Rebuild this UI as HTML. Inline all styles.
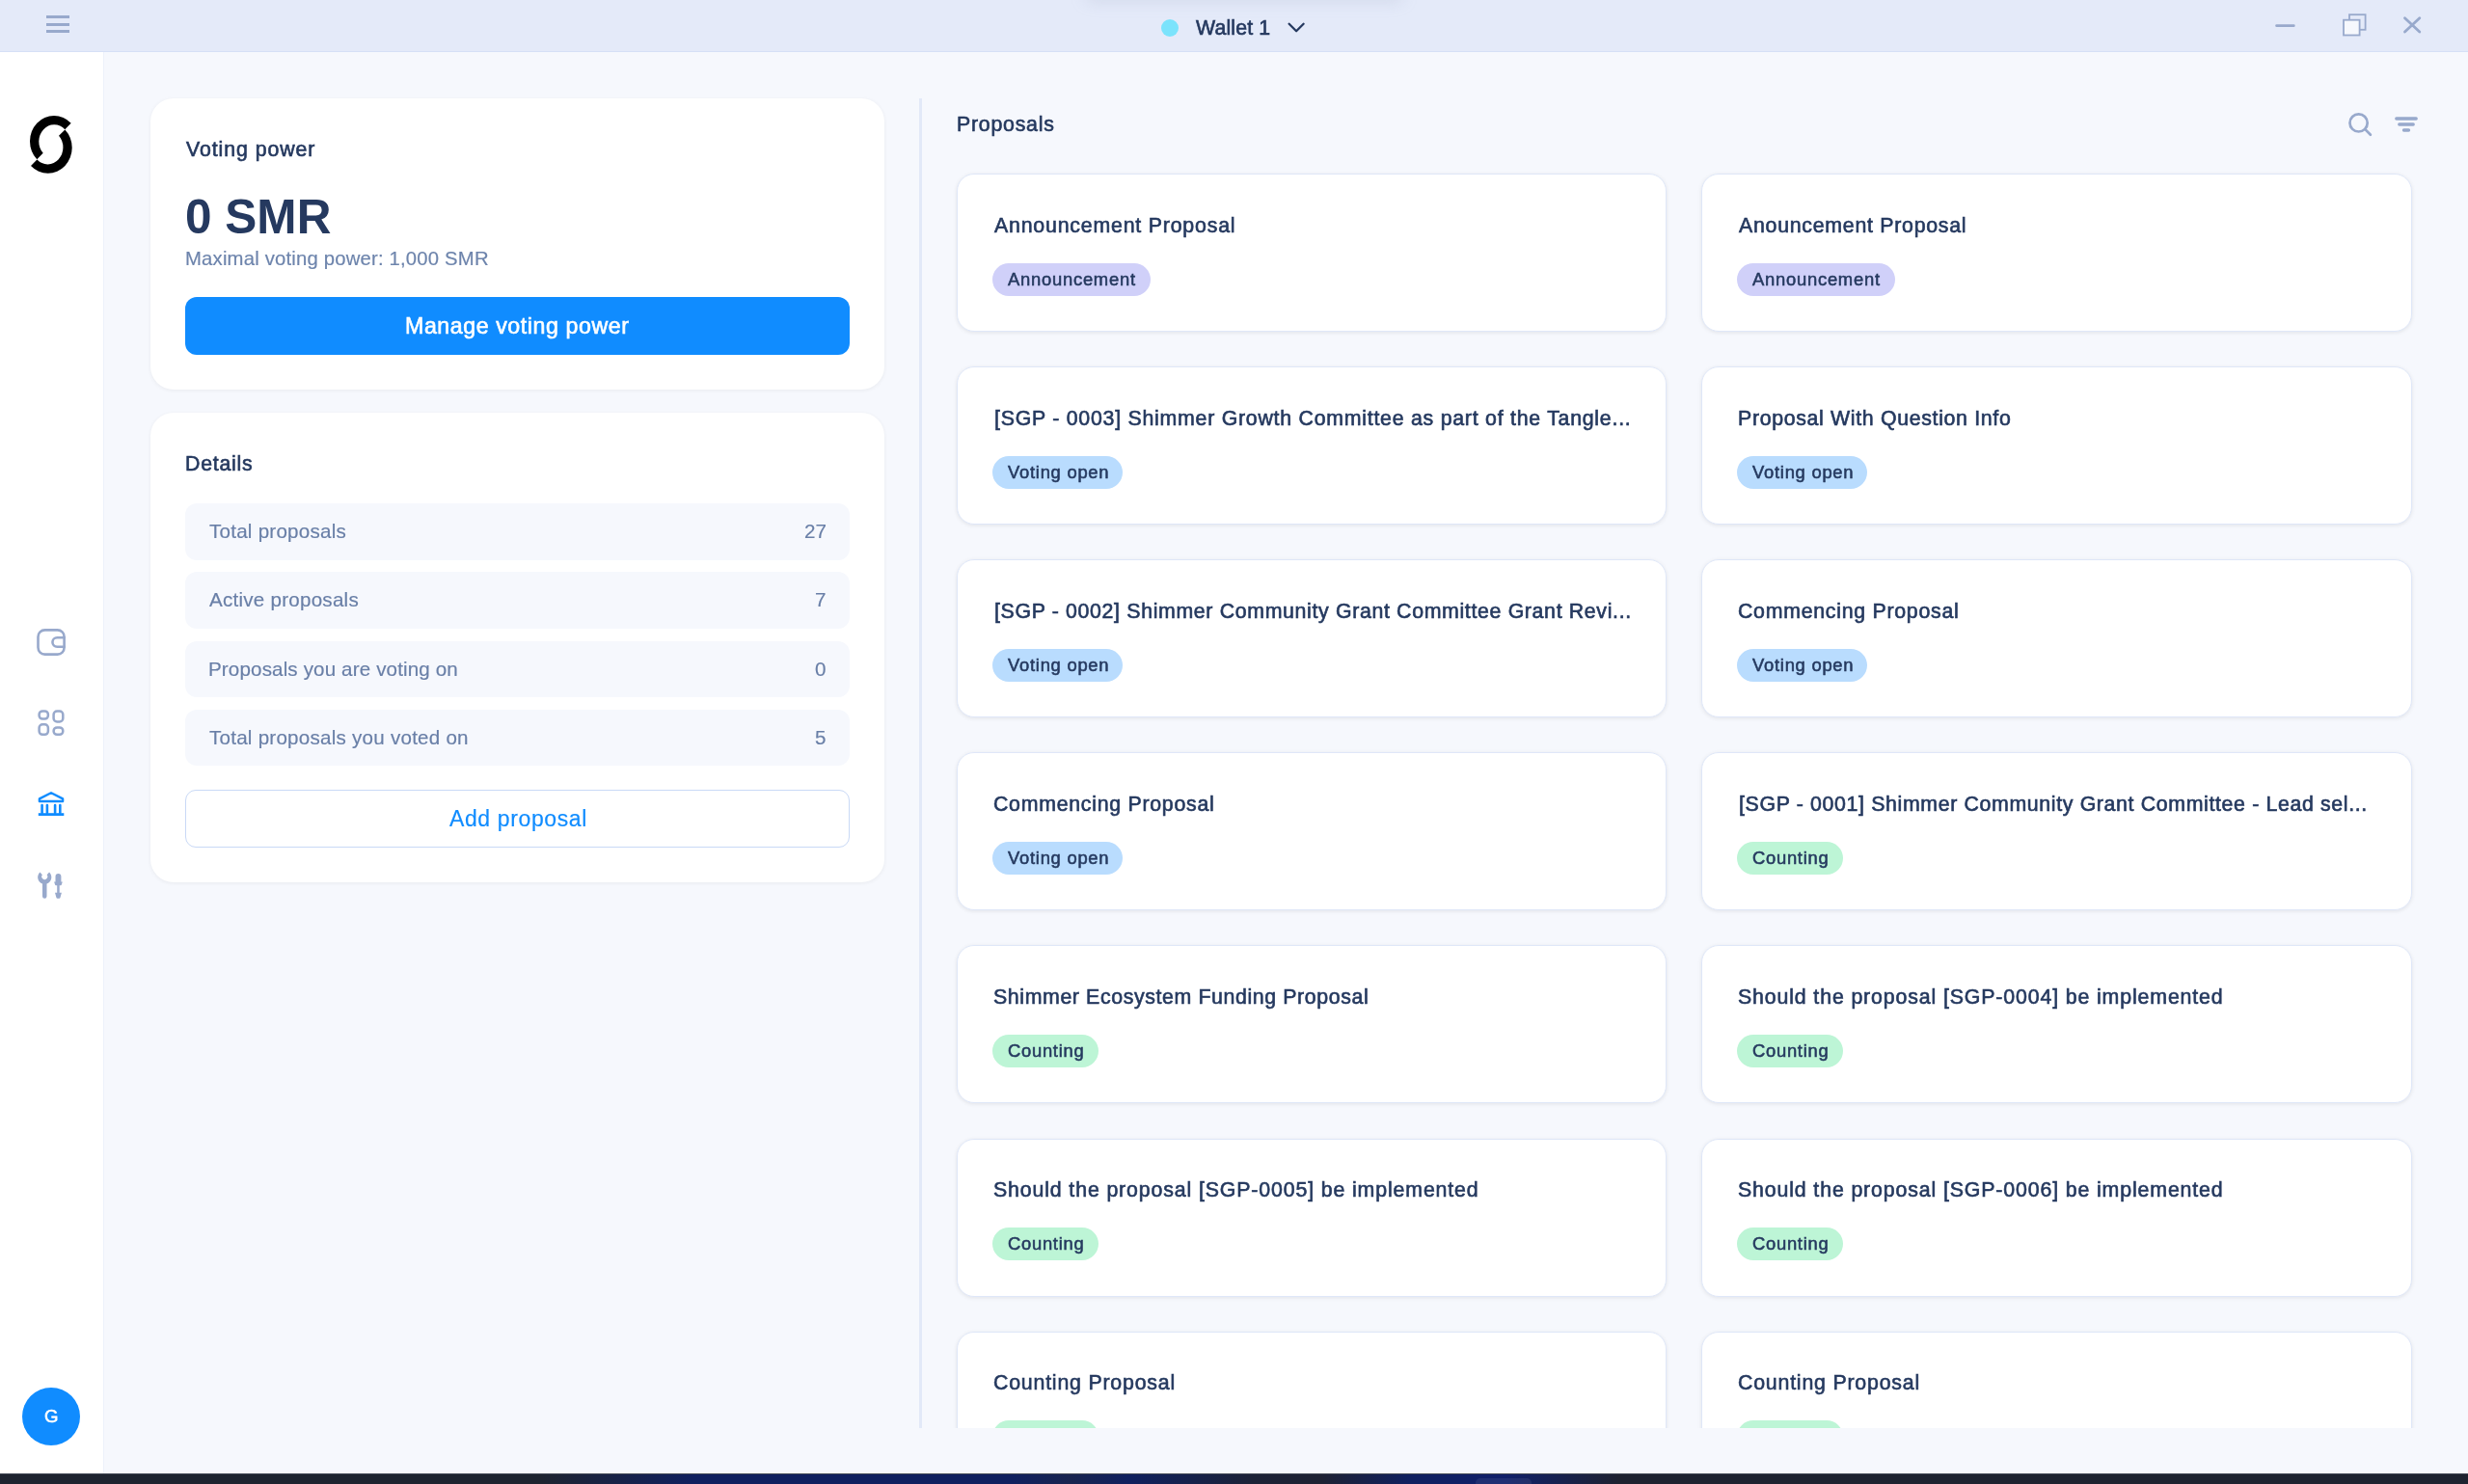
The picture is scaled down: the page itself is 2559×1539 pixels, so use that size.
<!DOCTYPE html>
<html><head><meta charset="utf-8"><title>Firefly - Governance</title>
<style>
html,body{margin:0;padding:0}
body{width:2559px;height:1539px;overflow:hidden;position:relative;background:#f6f8fd;font-family:"Liberation Sans", sans-serif}
.b{position:absolute}
.t{position:absolute;line-height:1;white-space:nowrap;will-change:transform}
</style></head><body>
<div class="b" style="left:0px;top:0px;width:2559px;height:53px;background:#e4eaf9"></div>
<div class="b" style="left:0px;top:53px;width:2559px;height:1px;background:#d6e0f6"></div>
<div class="b" style="left:1125px;top:-12px;width:330px;height:14px;border-radius:7px;background:rgba(140,150,180,0.2);filter:blur(8px)"></div>
<div class="b" style="left:48px;top:16px;width:24px;height:3px;background:#98a9cc"></div>
<div class="b" style="left:48px;top:23.7px;width:24px;height:3px;background:#98a9cc"></div>
<div class="b" style="left:48px;top:31px;width:24px;height:3px;background:#98a9cc"></div>
<div class="b" style="left:1204px;top:20px;width:18px;height:18px;border-radius:50%;background:#7be3fc"></div>
<div class="t" style="left:1240.00px;top:19.05px;color:#25395f;font-size:21.3px;-webkit-text-stroke:0.62px currentColor;letter-spacing:0.143px">Wallet 1</div>
<svg class="b" style="left:1330px;top:18px" width="30" height="22" viewBox="0 0 30 22"><path d="M6.6 6.8 L14.1 14.3 L21.6 6.8" fill="none" stroke="#25395f" stroke-width="2.3" stroke-linecap="round" stroke-linejoin="round"/></svg>
<svg class="b" style="left:2340px;top:0" width="219" height="53" viewBox="2340 0 219 53"><line x1="2360.6" y1="26.7" x2="2378.3" y2="26.7" stroke="#98a9cc" stroke-width="2.8" stroke-linecap="round"/><rect x="2436" y="15.2" width="16.6" height="15.6" fill="none" stroke="#98a9cc" stroke-width="1.8"/><rect x="2430" y="20.7" width="16.6" height="15.8" fill="#f6f8fd" stroke="#98a9cc" stroke-width="1.8"/><path d="M2493.5 18.8 L2508.8 33 M2508.8 18.8 L2493.5 33" stroke="#98a9cc" stroke-width="2.8" stroke-linecap="round"/></svg>
<div class="b" style="left:0px;top:54px;width:107px;height:1474px;background:#ffffff"></div>
<div class="b" style="left:107px;top:54px;width:1px;height:1474px;background:#edf1fa"></div>
<svg class="b" style="left:0;top:0" width="107" height="200" viewBox="0 0 107 200"><path d="M73.68 127.76 A25.0 26.5 0 0 0 38.32 165.24 L44.69 158.87 A16.0 17.5 0 0 1 67.31 134.13 Z M32.02 171.94 A25.0 26.5 0 0 0 67.38 134.46 L61.01 140.83 A16.0 17.5 0 0 1 38.39 165.57 Z" fill="#000"/></svg>
<svg class="b" style="left:0;top:600px" width="107" height="360" viewBox="0 600 107 360" fill="none" stroke-linecap="round" stroke-linejoin="round"><rect x="39.5" y="653.4" width="27.1" height="25.2" rx="7" stroke="#98a9cc" stroke-width="2.6"/><path d="M66.6 661.3 H59.2 A4.75 4.75 0 0 0 59.2 670.8 H66.6" stroke="#98a9cc" stroke-width="2.6"/><rect x="40.6" y="737.4" width="9.3" height="8.2" rx="3.5" stroke="#98a9cc" stroke-width="2.5"/><rect x="55.6" y="737.5" width="9.7" height="10.9" rx="3.5" stroke="#98a9cc" stroke-width="2.5"/><rect x="40.6" y="751.3" width="9.3" height="10.5" rx="3.5" stroke="#98a9cc" stroke-width="2.5"/><rect x="55.6" y="754.4" width="9.7" height="7.4" rx="3.5" stroke="#98a9cc" stroke-width="2.5"/><path d="M40.9 831 L40.9 828.4 L53 822.3 L65.1 828.4 L65.1 831 Z" stroke="#108cff" stroke-width="2.4"/><path d="M43.6 835 V843 M48.9 835 V843 M57.1 835 V843 M62.3 835 V843" stroke="#108cff" stroke-width="2.6"/><path d="M39.8 844.6 H66.3" stroke="#108cff" stroke-width="2.8" stroke-linecap="butt"/></svg>
<svg class="b" style="left:0;top:880px" width="107" height="70" viewBox="0 880 107 70"><path d="M41.4 904.6 L43.9 907.3 A3.0 3.0 0 1 0 48.6 907.3 L51.1 904.6 A7.0 7.0 0 0 1 48.5 916.4 V929.4 A2.25 2.25 0 0 1 44 929.4 V916.4 A7.0 7.0 0 0 1 41.4 904.6 Z" fill="#98a9cc"/><path d="M60.45 906 A3 3 0 0 1 63.4 909 V914.6 H64.8 L63.8 917.6 A0.8 0.8 0 0 1 63 918.2 H61.7 V925.8 H63.9 L62.5 930.8 A1.2 1.2 0 0 1 61.3 931.7 H59.6 A1.2 1.2 0 0 1 58.4 930.8 L57 925.8 H59.2 V918.2 H57.9 A0.8 0.8 0 0 1 57.1 917.6 L56.1 914.6 H57.5 V909 A3 3 0 0 1 60.45 906 Z" fill="#98a9cc"/></svg>
<div class="b" style="left:23px;top:1439px;width:60px;height:60px;border-radius:50%;background:#108cff"></div>
<div class="t" style="left:46.20px;top:1460.05px;color:#ffffff;font-size:18.6px;-webkit-text-stroke:0.55px currentColor;letter-spacing:0.000px">G</div>
<div class="b" style="left:0;top:1528px;width:2559px;height:11px;background:linear-gradient(90deg,#1e2430 0px,#1e2430 560px,#10205f 720px,#10205f 1050px,#18244f 1110px,#10205f 1170px,#1c2236 1300px,#1e2233 1370px,#10205f 1460px,#10206a 1560px,#1e2230 1680px,#1e2330 2559px)"></div>
<div class="b" style="left:1530px;top:1533px;width:58px;height:12px;border-radius:5px;background:rgba(255,255,255,0.07)"></div>
<div class="b" style="left:0px;top:1528px;width:2559px;height:1px;background:#434955"></div>
<div class="b" style="left:156px;top:102px;width:761px;height:302px;background:#fff;border-radius:24px;box-shadow:0 1px 4px rgba(0,0,0,0.06)"></div>
<div class="t" style="left:193.00px;top:145.05px;color:#25395f;font-size:21.3px;-webkit-text-stroke:0.62px currentColor;letter-spacing:0.936px">Voting power</div>
<div class="t" style="left:191.80px;top:200.05px;color:#25395f;font-size:49.5px;font-weight:700;letter-spacing:0.025px">0 SMR</div>
<div class="t" style="left:192.10px;top:258.05px;color:#6d84ac;font-size:20.3px;-webkit-text-stroke:0.18px currentColor;letter-spacing:0.190px">Maximal voting power: 1,000 SMR</div>
<div class="b" style="left:192px;top:308px;width:689px;height:60px;background:#108cff;border-radius:12px"></div>
<div class="t" style="left:420.10px;top:327.05px;color:#ffffff;font-size:23.2px;-webkit-text-stroke:0.62px currentColor;letter-spacing:0.567px">Manage voting power</div>
<div class="b" style="left:156px;top:428px;width:761px;height:487px;background:#fff;border-radius:24px;box-shadow:0 1px 4px rgba(0,0,0,0.06)"></div>
<div class="t" style="left:192.10px;top:471.05px;color:#25395f;font-size:21.3px;-webkit-text-stroke:0.62px currentColor;letter-spacing:0.750px">Details</div>
<div class="b" style="left:192px;top:522.0px;width:689px;height:58.7px;background:#f6f8fd;border-radius:12px"></div>
<div class="t" style="left:217.00px;top:541.05px;color:#697fa7;font-size:20.6px;-webkit-text-stroke:0.18px currentColor;letter-spacing:0.236px">Total proposals</div>
<div class="t" style="left:833.80px;top:541.05px;color:#697fa7;font-size:20.6px;-webkit-text-stroke:0.18px currentColor;letter-spacing:0.100px">27</div>
<div class="b" style="left:192px;top:593.25px;width:689px;height:58.7px;background:#f6f8fd;border-radius:12px"></div>
<div class="t" style="left:217.00px;top:612.05px;color:#697fa7;font-size:20.6px;-webkit-text-stroke:0.18px currentColor;letter-spacing:0.240px">Active proposals</div>
<div class="t" style="left:844.80px;top:612.05px;color:#697fa7;font-size:20.6px;-webkit-text-stroke:0.18px currentColor;letter-spacing:0.100px">7</div>
<div class="b" style="left:192px;top:664.5px;width:689px;height:58.7px;background:#f6f8fd;border-radius:12px"></div>
<div class="t" style="left:216.00px;top:684.05px;color:#697fa7;font-size:20.6px;-webkit-text-stroke:0.18px currentColor;letter-spacing:0.135px">Proposals you are voting on</div>
<div class="t" style="left:844.80px;top:684.05px;color:#697fa7;font-size:20.6px;-webkit-text-stroke:0.18px currentColor;letter-spacing:0.100px">0</div>
<div class="b" style="left:192px;top:735.75px;width:689px;height:58.7px;background:#f6f8fd;border-radius:12px"></div>
<div class="t" style="left:217.00px;top:755.05px;color:#697fa7;font-size:20.6px;-webkit-text-stroke:0.18px currentColor;letter-spacing:0.237px">Total proposals you voted on</div>
<div class="t" style="left:844.80px;top:755.05px;color:#697fa7;font-size:20.6px;-webkit-text-stroke:0.18px currentColor;letter-spacing:0.100px">5</div>
<div class="b" style="left:192px;top:819px;width:689px;height:60px;border:1px solid #c9d9f6;border-radius:11px;box-sizing:border-box"></div>
<div class="t" style="left:465.50px;top:838.05px;color:#108cff;font-size:23.0px;-webkit-text-stroke:0.18px currentColor;letter-spacing:0.618px">Add proposal</div>
<div class="b" style="left:953px;top:102px;width:2.5px;height:1379px;background:#e2e9f8"></div>
<div class="t" style="left:991.50px;top:119.05px;color:#25395f;font-size:21.3px;-webkit-text-stroke:0.62px currentColor;letter-spacing:0.762px">Proposals</div>
<svg class="b" style="left:2420px;top:100px" width="110" height="60" viewBox="2420 100 110 60" fill="none" stroke="#98a9cc" stroke-linecap="round"><circle cx="2445.6" cy="127.4" r="9.1" stroke-width="2.7"/><path d="M2452.6 134.4 L2457.9 139.7" stroke-width="2.7"/><path d="M2484.8 123 H2505.2 M2487.8 129 H2502.2 M2492.5 135 H2497.5" stroke-width="3.4"/></svg>
<div class="b" style="left:960px;top:54px;width:1599px;height:1427px;overflow:hidden">
<div class="b" style="left:32.00px;top:126.00px;width:736px;height:164px;box-sizing:border-box;background:#fff;border:1px solid #dfe7f8;border-radius:18px;box-shadow:0 1px 4px rgba(0,0,0,0.085)"></div>
<div class="t" style="left:70.60px;top:170.05px;color:#25395f;font-size:21.3px;-webkit-text-stroke:0.62px currentColor;letter-spacing:0.815px">Announcement Proposal</div>
<div class="b" style="left:69.40px;top:218.60px;width:164px;height:34px;border-radius:17px;background:#d0d0f9"></div>
<div class="t" style="left:85.10px;top:227.05px;color:#25395f;font-size:18.4px;-webkit-text-stroke:0.55px currentColor;letter-spacing:0.755px">Announcement</div>
<div class="b" style="left:804.00px;top:126.00px;width:737px;height:164px;box-sizing:border-box;background:#fff;border:1px solid #dfe7f8;border-radius:18px;box-shadow:0 1px 4px rgba(0,0,0,0.085)"></div>
<div class="t" style="left:842.60px;top:170.05px;color:#25395f;font-size:21.3px;-webkit-text-stroke:0.62px currentColor;letter-spacing:0.747px">Anouncement Proposal</div>
<div class="b" style="left:841.40px;top:218.60px;width:164px;height:34px;border-radius:17px;background:#d0d0f9"></div>
<div class="t" style="left:857.10px;top:227.05px;color:#25395f;font-size:18.4px;-webkit-text-stroke:0.55px currentColor;letter-spacing:0.755px">Announcement</div>
<div class="b" style="left:32.00px;top:326.10px;width:736px;height:164px;box-sizing:border-box;background:#fff;border:1px solid #dfe7f8;border-radius:18px;box-shadow:0 1px 4px rgba(0,0,0,0.085)"></div>
<div class="t" style="left:70.60px;top:370.05px;color:#25395f;font-size:21.3px;-webkit-text-stroke:0.62px currentColor;letter-spacing:0.757px">[SGP - 0003] Shimmer Growth Committee as part of the Tangle...</div>
<div class="b" style="left:69.40px;top:418.70px;width:135px;height:34px;border-radius:17px;background:#b9dcfe"></div>
<div class="t" style="left:85.10px;top:427.05px;color:#25395f;font-size:18.4px;-webkit-text-stroke:0.55px currentColor;letter-spacing:0.740px">Voting open</div>
<div class="b" style="left:804.00px;top:326.10px;width:737px;height:164px;box-sizing:border-box;background:#fff;border:1px solid #dfe7f8;border-radius:18px;box-shadow:0 1px 4px rgba(0,0,0,0.085)"></div>
<div class="t" style="left:841.60px;top:370.05px;color:#25395f;font-size:21.3px;-webkit-text-stroke:0.62px currentColor;letter-spacing:0.677px">Proposal With Question Info</div>
<div class="b" style="left:841.40px;top:418.70px;width:135px;height:34px;border-radius:17px;background:#b9dcfe"></div>
<div class="t" style="left:857.10px;top:427.05px;color:#25395f;font-size:18.4px;-webkit-text-stroke:0.55px currentColor;letter-spacing:0.740px">Voting open</div>
<div class="b" style="left:32.00px;top:526.20px;width:736px;height:164px;box-sizing:border-box;background:#fff;border:1px solid #dfe7f8;border-radius:18px;box-shadow:0 1px 4px rgba(0,0,0,0.085)"></div>
<div class="t" style="left:70.60px;top:570.05px;color:#25395f;font-size:21.3px;-webkit-text-stroke:0.62px currentColor;letter-spacing:0.664px">[SGP - 0002] Shimmer Community Grant Committee Grant Revi...</div>
<div class="b" style="left:69.40px;top:618.80px;width:135px;height:34px;border-radius:17px;background:#b9dcfe"></div>
<div class="t" style="left:85.10px;top:627.05px;color:#25395f;font-size:18.4px;-webkit-text-stroke:0.55px currentColor;letter-spacing:0.740px">Voting open</div>
<div class="b" style="left:804.00px;top:526.20px;width:737px;height:164px;box-sizing:border-box;background:#fff;border:1px solid #dfe7f8;border-radius:18px;box-shadow:0 1px 4px rgba(0,0,0,0.085)"></div>
<div class="t" style="left:841.60px;top:570.05px;color:#25395f;font-size:21.3px;-webkit-text-stroke:0.62px currentColor;letter-spacing:0.739px">Commencing Proposal</div>
<div class="b" style="left:841.40px;top:618.80px;width:135px;height:34px;border-radius:17px;background:#b9dcfe"></div>
<div class="t" style="left:857.10px;top:627.05px;color:#25395f;font-size:18.4px;-webkit-text-stroke:0.55px currentColor;letter-spacing:0.740px">Voting open</div>
<div class="b" style="left:32.00px;top:726.30px;width:736px;height:164px;box-sizing:border-box;background:#fff;border:1px solid #dfe7f8;border-radius:18px;box-shadow:0 1px 4px rgba(0,0,0,0.085)"></div>
<div class="t" style="left:69.60px;top:770.05px;color:#25395f;font-size:21.3px;-webkit-text-stroke:0.62px currentColor;letter-spacing:0.739px">Commencing Proposal</div>
<div class="b" style="left:69.40px;top:818.90px;width:135px;height:34px;border-radius:17px;background:#b9dcfe"></div>
<div class="t" style="left:85.10px;top:827.05px;color:#25395f;font-size:18.4px;-webkit-text-stroke:0.55px currentColor;letter-spacing:0.740px">Voting open</div>
<div class="b" style="left:804.00px;top:726.30px;width:737px;height:164px;box-sizing:border-box;background:#fff;border:1px solid #dfe7f8;border-radius:18px;box-shadow:0 1px 4px rgba(0,0,0,0.085)"></div>
<div class="t" style="left:842.60px;top:770.05px;color:#25395f;font-size:21.3px;-webkit-text-stroke:0.62px currentColor;letter-spacing:0.654px">[SGP - 0001] Shimmer Community Grant Committee - Lead sel...</div>
<div class="b" style="left:841.40px;top:818.90px;width:110px;height:34px;border-radius:17px;background:#bdf5d6"></div>
<div class="t" style="left:857.10px;top:827.05px;color:#25395f;font-size:18.4px;-webkit-text-stroke:0.55px currentColor;letter-spacing:0.714px">Counting</div>
<div class="b" style="left:32.00px;top:926.40px;width:736px;height:164px;box-sizing:border-box;background:#fff;border:1px solid #dfe7f8;border-radius:18px;box-shadow:0 1px 4px rgba(0,0,0,0.085)"></div>
<div class="t" style="left:69.60px;top:970.05px;color:#25395f;font-size:21.3px;-webkit-text-stroke:0.62px currentColor;letter-spacing:0.624px">Shimmer Ecosystem Funding Proposal</div>
<div class="b" style="left:69.40px;top:1019.00px;width:110px;height:34px;border-radius:17px;background:#bdf5d6"></div>
<div class="t" style="left:85.10px;top:1027.05px;color:#25395f;font-size:18.4px;-webkit-text-stroke:0.55px currentColor;letter-spacing:0.714px">Counting</div>
<div class="b" style="left:804.00px;top:926.40px;width:737px;height:164px;box-sizing:border-box;background:#fff;border:1px solid #dfe7f8;border-radius:18px;box-shadow:0 1px 4px rgba(0,0,0,0.085)"></div>
<div class="t" style="left:841.60px;top:970.05px;color:#25395f;font-size:21.3px;-webkit-text-stroke:0.62px currentColor;letter-spacing:0.877px">Should the proposal [SGP-0004] be implemented</div>
<div class="b" style="left:841.40px;top:1019.00px;width:110px;height:34px;border-radius:17px;background:#bdf5d6"></div>
<div class="t" style="left:857.10px;top:1027.05px;color:#25395f;font-size:18.4px;-webkit-text-stroke:0.55px currentColor;letter-spacing:0.714px">Counting</div>
<div class="b" style="left:32.00px;top:1126.50px;width:736px;height:164px;box-sizing:border-box;background:#fff;border:1px solid #dfe7f8;border-radius:18px;box-shadow:0 1px 4px rgba(0,0,0,0.085)"></div>
<div class="t" style="left:69.60px;top:1170.05px;color:#25395f;font-size:21.3px;-webkit-text-stroke:0.62px currentColor;letter-spacing:0.877px">Should the proposal [SGP-0005] be implemented</div>
<div class="b" style="left:69.40px;top:1219.10px;width:110px;height:34px;border-radius:17px;background:#bdf5d6"></div>
<div class="t" style="left:85.10px;top:1227.05px;color:#25395f;font-size:18.4px;-webkit-text-stroke:0.55px currentColor;letter-spacing:0.714px">Counting</div>
<div class="b" style="left:804.00px;top:1126.50px;width:737px;height:164px;box-sizing:border-box;background:#fff;border:1px solid #dfe7f8;border-radius:18px;box-shadow:0 1px 4px rgba(0,0,0,0.085)"></div>
<div class="t" style="left:841.60px;top:1170.05px;color:#25395f;font-size:21.3px;-webkit-text-stroke:0.62px currentColor;letter-spacing:0.877px">Should the proposal [SGP-0006] be implemented</div>
<div class="b" style="left:841.40px;top:1219.10px;width:110px;height:34px;border-radius:17px;background:#bdf5d6"></div>
<div class="t" style="left:857.10px;top:1227.05px;color:#25395f;font-size:18.4px;-webkit-text-stroke:0.55px currentColor;letter-spacing:0.714px">Counting</div>
<div class="b" style="left:32.00px;top:1326.60px;width:736px;height:164px;box-sizing:border-box;background:#fff;border:1px solid #dfe7f8;border-radius:18px;box-shadow:0 1px 4px rgba(0,0,0,0.085)"></div>
<div class="t" style="left:69.60px;top:1370.05px;color:#25395f;font-size:21.3px;-webkit-text-stroke:0.62px currentColor;letter-spacing:0.806px">Counting Proposal</div>
<div class="b" style="left:69.40px;top:1419.20px;width:110px;height:34px;border-radius:17px;background:#bdf5d6"></div>
<div class="t" style="left:85.10px;top:1427.05px;color:#25395f;font-size:18.4px;-webkit-text-stroke:0.55px currentColor;letter-spacing:0.714px">Counting</div>
<div class="b" style="left:804.00px;top:1326.60px;width:737px;height:164px;box-sizing:border-box;background:#fff;border:1px solid #dfe7f8;border-radius:18px;box-shadow:0 1px 4px rgba(0,0,0,0.085)"></div>
<div class="t" style="left:841.60px;top:1370.05px;color:#25395f;font-size:21.3px;-webkit-text-stroke:0.62px currentColor;letter-spacing:0.806px">Counting Proposal</div>
<div class="b" style="left:841.40px;top:1419.20px;width:110px;height:34px;border-radius:17px;background:#bdf5d6"></div>
<div class="t" style="left:857.10px;top:1427.05px;color:#25395f;font-size:18.4px;-webkit-text-stroke:0.55px currentColor;letter-spacing:0.714px">Counting</div>
</div>
</body></html>
